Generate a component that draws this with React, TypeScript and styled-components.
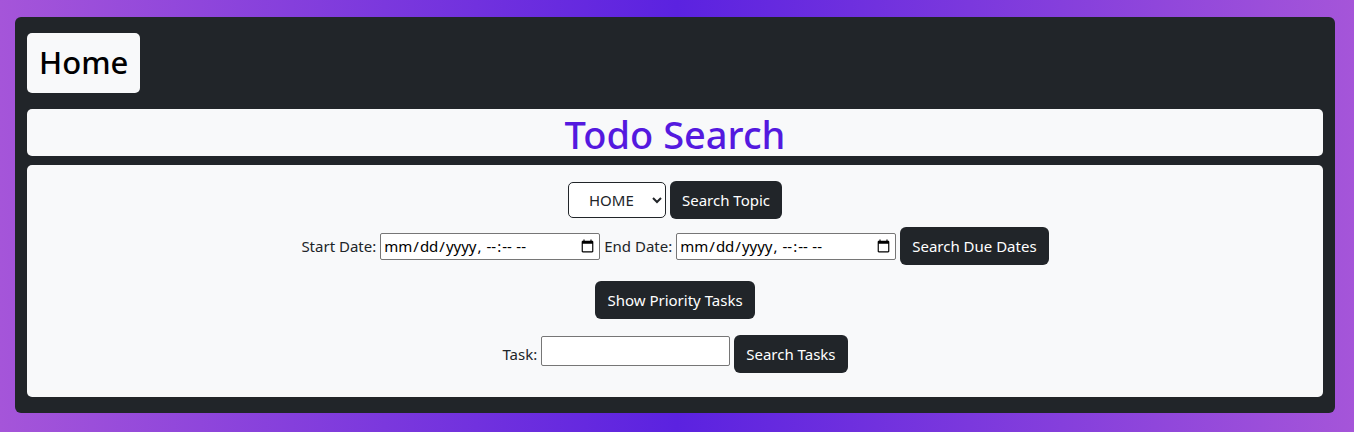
import React from "react";
import styled, { createGlobalStyle } from "styled-components";

const Global = createGlobalStyle`
  html, body { margin: 0; padding: 0; }
  body {
    font-family: "Noto Sans", "Open Sans", sans-serif;
    font-size: 16px;
    color: #212529;
    background: linear-gradient(90deg, #a555d9 0%, #5b22e0 50%, #a555d9 100%);
    min-height: 432px;
  }
`;

const Page = styled.div`
  padding: 17px 19px 19px 15px;
`;

const Shell = styled.div`
  background: #212529;
  border-radius: 6px;
  padding: 16px 12px 16px 12px;
  display: flex;
  flex-direction: column;
`;

const HomeBox = styled.div`
  align-self: flex-start;
  background: #f8f9fa;
  border-radius: 5px;
  padding: 10px 12px 11px 12px;
  font-size: 31px;
  font-weight: 500;
  line-height: 39px;
  color: #000;
`;

const TitleBox = styled.div`
  margin-top: 16px;
  background: #f8f9fa;
  border-radius: 5px;
  height: 47px;
  display: flex;
  justify-content: center;
  align-items: center;
`;

const Title = styled.h1`
  margin: 0;
  font-size: 38px;
  font-weight: 500;
  line-height: 47px;
  color: #5419df;
  transform: translateY(2px);
`;

const Panel = styled.div`
  margin-top: 9px;
  background: #f8f9fa;
  border-radius: 5px;
  padding: 16px 0 24px;
  display: flex;
  flex-direction: column;
  align-items: center;
`;

const Row = styled.div<{ $gap?: number }>`
  display: flex;
  align-items: center;
  justify-content: center;
  gap: 4px;
  margin-top: ${(p) => p.$gap ?? 0}px;
`;

const Label = styled.label`
  font-size: 15px;
  color: #212529;
`;

const Button = styled.button`
  background: #212529;
  color: #fff;
  border: none;
  border-radius: 6px;
  padding: 0 12px;
  height: 38px;
  font-family: inherit;
  font-size: 15px;
`;

const Select = styled.select`
  width: 98px;
  height: 36px;
  border: 1px solid #212529;
  border-radius: 5px;
  background: #fff;
  font-family: inherit;
  font-size: 15px;
  color: #212529;
  padding: 0 6px 0 16px;
`;

const DateInput = styled.input`
  width: 220px;
  height: 27px;
  box-sizing: border-box;
  border: 1px solid #767676;
  border-radius: 2px;
  font-family: inherit;
  font-size: 15px;
  padding: 0 2px;
`;

const TextInput = styled.input`
  width: 189px;
  height: 30px;
  box-sizing: border-box;
  border: 1px solid #767676;
  border-radius: 2px;
  font-family: inherit;
  font-size: 15px;
  margin-top: -6px;
`;

export default function App() {
  return (
    <>
      <Global />
      <Page>
        <Shell>
          <HomeBox>Home</HomeBox>
          <TitleBox>
            <Title>Todo Search</Title>
          </TitleBox>
          <Panel>
            <Row>
              <Select defaultValue="HOME">
                <option value="HOME">HOME</option>
                <option value="WORK">WORK</option>
              </Select>
              <Button>Search Topic</Button>
            </Row>
            <Row $gap={8}>
              <Label>Start Date:</Label>
              <DateInput type="datetime-local" />
              <Label>End Date:</Label>
              <DateInput type="datetime-local" />
              <Button>Search Due Dates</Button>
            </Row>
            <Row $gap={16}>
              <Button>Show Priority Tasks</Button>
            </Row>
            <Row $gap={16}>
              <Label>Task:</Label>
              <TextInput type="text" />
              <Button>Search Tasks</Button>
            </Row>
          </Panel>
        </Shell>
      </Page>
    </>
  );
}
